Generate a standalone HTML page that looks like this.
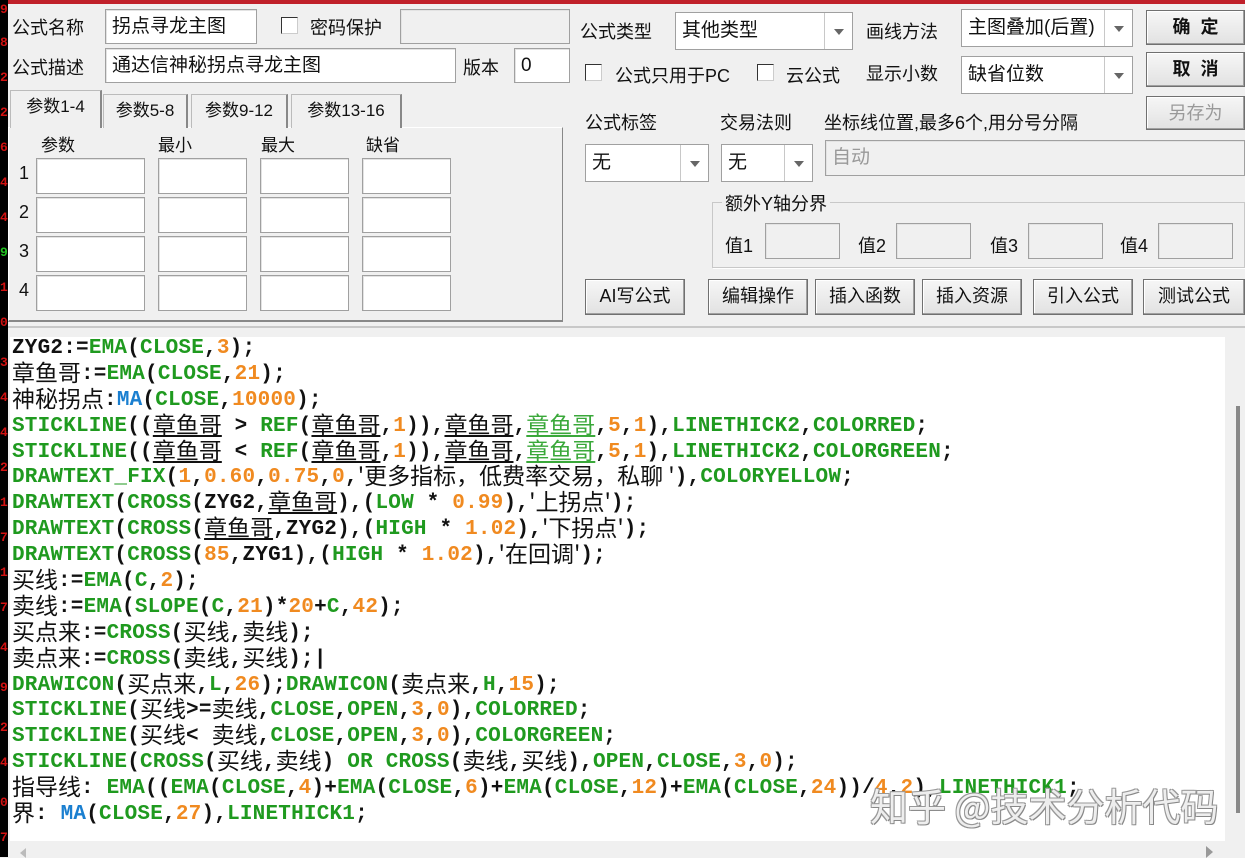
<!DOCTYPE html>
<html><head><meta charset="utf-8">
<style>
*{box-sizing:border-box;margin:0;padding:0}
body{width:1245px;height:857px;overflow:hidden;background:#f0f0f0;position:relative;font-family:"Liberation Sans","Noto Sans CJK SC",sans-serif;font-size:18px;color:#111}
.a{position:absolute;white-space:nowrap}
.in{position:absolute;background:#fff;border:1px solid #a0a0a0;box-shadow:inset 1px 1px 0 #e3e3e3;font-size:19px;padding:4px 6px;line-height:26px}
.dis{background:#f0f0f0}
.cb{position:absolute;width:17px;height:17px;background:#fff;border:1px solid #333;border-right-color:#ccc;border-bottom-color:#ccc}
.cmb{position:absolute;background:#fff;border:1px solid #a0a0a0;font-size:19px;padding:4px 6px;line-height:28px}
.cmb i{position:absolute;right:0;top:0;bottom:0;width:28px;border-left:1px solid #c8c8c8}
.cmb i:after{content:"";position:absolute;left:9px;top:50%;margin-top:-2px;border-left:5px solid transparent;border-right:5px solid transparent;border-top:6px solid #666}
.btn{position:absolute;background:linear-gradient(#f6f6f6,#e2e2e2);border:1px solid #707070;box-shadow:inset -1px -1px 0 #a0a0a0,inset 1px 1px 0 #fff;font-size:18px;text-align:center;line-height:32px}
.tab{position:absolute;top:94px;height:34px;border:1px solid #bbb;border-bottom:none;font-size:17px;text-align:center;line-height:32px;background:#f0f0f0}
#strip{position:absolute;left:0;top:0;width:8px;height:857px;background:#000}
#strip span{position:absolute;left:0;font:bold 13px "Liberation Mono",monospace;color:#d01010}
#code{position:absolute;left:10px;top:337px;width:1215px;height:504px;background:#fff;overflow:hidden}
.cd{position:absolute;left:2px;top:0}
.cd div{height:25.9px;line-height:25.9px;white-space:pre;font:bold 21px "Liberation Mono",monospace;color:#111;letter-spacing:0.2px;overflow:visible}
.g{color:#1f9a1f}.o{color:#f08a20}.b{color:#1a7fd0}
.c{font:normal 23px "Noto Sans CJK SC","WenQuanYi Zen Hei",sans-serif;letter-spacing:0;line-height:20px;vertical-align:top;display:inline-block;height:25px;position:relative;top:-2px}
.gu{color:#3aa83a;text-decoration:underline}
.cu{text-decoration:underline}
</style></head><body>
<div class="a" style="left:0;top:0;width:1245px;height:4px;background:#c0202a"></div>
<div id="strip">
<span style="top:2px">9</span><span style="top:35px">8</span><span style="top:70px">2</span><span style="top:105px">2</span><span style="top:140px">6</span><span style="top:175px">4</span><span style="top:210px">4</span><span style="top:245px;color:#20c020">9</span><span style="top:280px">1</span><span style="top:315px">0</span><span style="top:355px">3</span><span style="top:390px">4</span><span style="top:425px">4</span><span style="top:460px">2</span><span style="top:495px">1</span><span style="top:530px">7</span><span style="top:565px">1</span><span style="top:600px">7</span><span style="top:640px">4</span><span style="top:680px">9</span><span style="top:720px">2</span><span style="top:755px">4</span><span style="top:795px">0</span><span style="top:830px">7</span>
</div>

<div class="a" style="left:12px;top:14px">公式名称</div>
<div class="in" style="left:105px;top:9px;width:152px;height:35px">拐点寻龙主图</div>
<div class="cb" style="left:281px;top:17px"></div>
<div class="a" style="left:310px;top:14px">密码保护</div>
<div class="in dis" style="left:400px;top:9px;width:170px;height:35px"></div>
<div class="a" style="left:12px;top:54px">公式描述</div>
<div class="in" style="left:105px;top:48px;width:351px;height:35px">通达信神秘拐点寻龙主图</div>
<div class="a" style="left:463px;top:54px">版本</div>
<div class="in" style="left:514px;top:48px;width:56px;height:35px">0</div>

<div class="a" style="left:8px;top:127px;width:555px;height:195px;border:1px solid #fff;border-right-color:#888;border-bottom:2px solid #888"></div>
<div class="tab" style="left:10px;top:90px;height:38px;width:92px;border-right:2px solid #888">参数1-4</div>
<div class="tab" style="left:103px;width:85px;border-right:2px solid #888">参数5-8</div>
<div class="tab" style="left:191px;width:97px;border-right:2px solid #888">参数9-12</div>
<div class="tab" style="left:291px;width:111px;border-right:2px solid #888">参数13-16</div>
<div class="a" style="left:41px;top:131px;font-size:17px">参数</div>
<div class="a" style="left:158px;top:131px;font-size:17px">最小</div>
<div class="a" style="left:261px;top:131px;font-size:17px">最大</div>
<div class="a" style="left:366px;top:131px;font-size:17px">缺省</div>
<div class="a" style="left:19px;top:163px">1</div><div class="a" style="left:19px;top:202px">2</div><div class="a" style="left:19px;top:241px">3</div><div class="a" style="left:19px;top:280px">4</div>
<div class="in" style="left:36px;top:158px;width:109px;height:36px"></div><div class="in" style="left:158px;top:158px;width:89px;height:36px"></div><div class="in" style="left:260px;top:158px;width:89px;height:36px"></div><div class="in" style="left:362px;top:158px;width:89px;height:36px"></div>
<div class="in" style="left:36px;top:197px;width:109px;height:36px"></div><div class="in" style="left:158px;top:197px;width:89px;height:36px"></div><div class="in" style="left:260px;top:197px;width:89px;height:36px"></div><div class="in" style="left:362px;top:197px;width:89px;height:36px"></div>
<div class="in" style="left:36px;top:236px;width:109px;height:36px"></div><div class="in" style="left:158px;top:236px;width:89px;height:36px"></div><div class="in" style="left:260px;top:236px;width:89px;height:36px"></div><div class="in" style="left:362px;top:236px;width:89px;height:36px"></div>
<div class="in" style="left:36px;top:275px;width:109px;height:36px"></div><div class="in" style="left:158px;top:275px;width:89px;height:36px"></div><div class="in" style="left:260px;top:275px;width:89px;height:36px"></div><div class="in" style="left:362px;top:275px;width:89px;height:36px"></div>

<div class="a" style="left:580px;top:18px">公式类型</div>
<div class="cmb" style="left:675px;top:12px;width:178px;height:38px">其他类型<i></i></div>
<div class="a" style="left:866px;top:18px">画线方法</div>
<div class="cmb" style="left:961px;top:9px;width:172px;height:38px">主图叠加(后置)<i></i></div>
<div class="btn" style="left:1146px;top:10px;width:99px;height:35px;font-weight:bold">确&nbsp;&nbsp;定</div>
<div class="cb" style="left:585px;top:64px"></div>
<div class="a" style="left:615px;top:62px">公式只用于PC</div>
<div class="cb" style="left:757px;top:64px"></div>
<div class="a" style="left:786px;top:62px">云公式</div>
<div class="a" style="left:866px;top:60px">显示小数</div>
<div class="cmb" style="left:961px;top:56px;width:172px;height:38px">缺省位数<i></i></div>
<div class="btn" style="left:1146px;top:52px;width:99px;height:35px;font-weight:bold">取&nbsp;&nbsp;消</div>
<div class="btn" style="left:1146px;top:96px;width:99px;height:34px;color:#999">另存为</div>
<div class="a" style="left:585px;top:109px">公式标签</div>
<div class="a" style="left:720px;top:109px">交易法则</div>
<div class="a" style="left:824px;top:109px">坐标线位置,最多6个,用分号分隔</div>
<div class="cmb" style="left:585px;top:144px;width:124px;height:38px">无<i></i></div>
<div class="cmb" style="left:721px;top:144px;width:92px;height:38px">无<i></i></div>
<div class="in dis" style="left:825px;top:140px;width:420px;height:36px;color:#999">自动</div>
<div class="a" style="left:712px;top:202px;width:533px;height:66px;border:1px solid #c8c8c8;box-shadow:1px 1px 0 #fff"></div>
<div class="a" style="left:722px;top:190px;background:#f0f0f0;padding:0 3px">额外Y轴分界</div>
<div class="a" style="left:725px;top:232px">值1</div><div class="in dis" style="left:765px;top:223px;width:75px;height:36px"></div>
<div class="a" style="left:858px;top:232px">值2</div><div class="in dis" style="left:896px;top:223px;width:75px;height:36px"></div>
<div class="a" style="left:990px;top:232px">值3</div><div class="in dis" style="left:1028px;top:223px;width:75px;height:36px"></div>
<div class="a" style="left:1120px;top:232px">值4</div><div class="in dis" style="left:1158px;top:223px;width:75px;height:36px"></div>
<div class="btn" style="left:585px;top:279px;width:100px;height:36px">AI写公式</div>
<div class="btn" style="left:708px;top:279px;width:100px;height:36px">编辑操作</div>
<div class="btn" style="left:815px;top:279px;width:100px;height:36px">插入函数</div>
<div class="btn" style="left:922px;top:279px;width:100px;height:36px">插入资源</div>
<div class="btn" style="left:1033px;top:279px;width:100px;height:36px">引入公式</div>
<div class="btn" style="left:1143px;top:279px;width:102px;height:36px">测试公式</div>

<div class="a" style="left:8px;top:326px;width:1237px;height:2px;background:#c8c8c8"></div>
<div id="code"><div class="cd">
<div>ZYG2:=<span class="g">EMA</span>(<span class="g">CLOSE</span>,<span class="o">3</span>);</div>
<div><span class="c">章鱼哥</span>:=<span class="g">EMA</span>(<span class="g">CLOSE</span>,<span class="o">21</span>);</div>
<div><span class="c">神秘拐点</span>:<span class="b">MA</span>(<span class="g">CLOSE</span>,<span class="o">10000</span>);</div>
<div><span class="g">STICKLINE</span>((<span class="c cu">章鱼哥</span> &gt; <span class="g">REF</span>(<span class="c cu">章鱼哥</span>,<span class="o">1</span>)),<span class="c cu">章鱼哥</span>,<span class="c gu">章鱼哥</span>,<span class="o">5</span>,<span class="o">1</span>),<span class="g">LINETHICK2</span>,<span class="g">COLORRED</span>;</div>
<div><span class="g">STICKLINE</span>((<span class="c cu">章鱼哥</span> &lt; <span class="g">REF</span>(<span class="c cu">章鱼哥</span>,<span class="o">1</span>)),<span class="c cu">章鱼哥</span>,<span class="c gu">章鱼哥</span>,<span class="o">5</span>,<span class="o">1</span>),<span class="g">LINETHICK2</span>,<span class="g">COLORGREEN</span>;</div>
<div><span class="g">DRAWTEXT_FIX</span>(<span class="o">1</span>,<span class="o">0.60</span>,<span class="o">0.75</span>,<span class="o">0</span>,<span class="c">'更多指标，低费率交易，私聊 '</span>),<span class="g">COLORYELLOW</span>;</div>
<div><span class="g">DRAWTEXT</span>(<span class="g">CROSS</span>(ZYG2,<span class="c cu">章鱼哥</span>),(<span class="g">LOW</span> * <span class="o">0.99</span>),<span class="c">'上拐点'</span>);</div>
<div><span class="g">DRAWTEXT</span>(<span class="g">CROSS</span>(<span class="c cu">章鱼哥</span>,ZYG2),(<span class="g">HIGH</span> * <span class="o">1.02</span>),<span class="c">'下拐点'</span>);</div>
<div><span class="g">DRAWTEXT</span>(<span class="g">CROSS</span>(<span class="o">85</span>,ZYG1),(<span class="g">HIGH</span> * <span class="o">1.02</span>),<span class="c">'在回调'</span>);</div>
<div><span class="c">买线</span>:=<span class="g">EMA</span>(<span class="g">C</span>,<span class="o">2</span>);</div>
<div><span class="c">卖线</span>:=<span class="g">EMA</span>(<span class="g">SLOPE</span>(<span class="g">C</span>,<span class="o">21</span>)*<span class="o">20</span>+<span class="g">C</span>,<span class="o">42</span>);</div>
<div><span class="c">买点来</span>:=<span class="g">CROSS</span>(<span class="c">买线</span>,<span class="c">卖线</span>);</div>
<div><span class="c">卖点来</span>:=<span class="g">CROSS</span>(<span class="c">卖线</span>,<span class="c">买线</span>);|</div>
<div><span class="g">DRAWICON</span>(<span class="c">买点来</span>,<span class="g">L</span>,<span class="o">26</span>);<span class="g">DRAWICON</span>(<span class="c">卖点来</span>,<span class="g">H</span>,<span class="o">15</span>);</div>
<div><span class="g">STICKLINE</span>(<span class="c">买线</span>&gt;=<span class="c">卖线</span>,<span class="g">CLOSE</span>,<span class="g">OPEN</span>,<span class="o">3</span>,<span class="o">0</span>),<span class="g">COLORRED</span>;</div>
<div><span class="g">STICKLINE</span>(<span class="c">买线</span>&lt; <span class="c">卖线</span>,<span class="g">CLOSE</span>,<span class="g">OPEN</span>,<span class="o">3</span>,<span class="o">0</span>),<span class="g">COLORGREEN</span>;</div>
<div><span class="g">STICKLINE</span>(<span class="g">CROSS</span>(<span class="c">买线</span>,<span class="c">卖线</span>) <span class="g">OR</span> <span class="g">CROSS</span>(<span class="c">卖线</span>,<span class="c">买线</span>),<span class="g">OPEN</span>,<span class="g">CLOSE</span>,<span class="o">3</span>,<span class="o">0</span>);</div>
<div><span class="c">指导线</span>: <span class="g">EMA</span>((<span class="g">EMA</span>(<span class="g">CLOSE</span>,<span class="o">4</span>)+<span class="g">EMA</span>(<span class="g">CLOSE</span>,<span class="o">6</span>)+<span class="g">EMA</span>(<span class="g">CLOSE</span>,<span class="o">12</span>)+<span class="g">EMA</span>(<span class="g">CLOSE</span>,<span class="o">24</span>))/<span class="o">4</span>,<span class="o">2</span>),<span class="g">LINETHICK1</span>;</div>
<div><span class="c">界</span>: <span class="b">MA</span>(<span class="g">CLOSE</span>,<span class="o">27</span>),<span class="g">LINETHICK1</span>;</div>
</div>
<div class="a" style="left:860px;top:440px;font:38px 'Noto Sans CJK SC',sans-serif;color:rgba(255,255,255,0.85);text-shadow:1px 1px 0 #888,-1px -1px 0 #999,1px -1px 0 #999,-1px 1px 0 #999">知乎 @技术分析代码</div>
</div>
<div class="a" style="left:1236px;top:406px;width:4px;height:407px;background:#888"></div>
<div class="a" style="left:20px;top:848px;width:0;height:0;border-top:5px solid transparent;border-bottom:5px solid transparent;border-right:6px solid #bbb"></div>
<div class="a" style="left:1206px;top:846px;width:0;height:0;border-top:6px solid transparent;border-bottom:6px solid transparent;border-left:7px solid #999"></div>
</body></html>
